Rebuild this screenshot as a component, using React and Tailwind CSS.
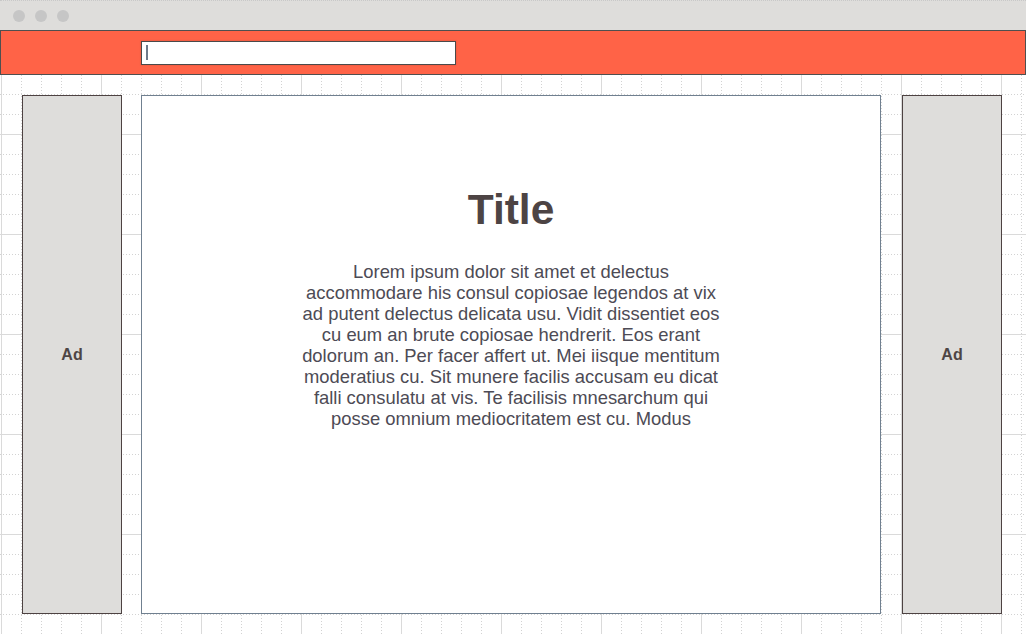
import React from "react";

function GridBg() {
  const vs = [];
  for (let i = 0; i < 52; i++) {
    const x = 1 + i * 20;
    const solid = i % 5 === 0;
    vs.push(
      <line
        key={"v" + i}
        x1={x + 0.5}
        y1={0}
        x2={x + 0.5}
        y2={634}
        stroke={solid ? "#dadada" : "#d2d2d2"}
        strokeWidth="1"
        strokeDasharray={solid ? undefined : "1 2"}
      />
    );
  }
  const hs = [];
  for (let j = 0; j < 33; j++) {
    const y = 14 + j * 20;
    const solid = (y - 34) % 100 === 0;
    hs.push(
      <line
        key={"h" + j}
        x1={0}
        y1={y + 0.5}
        x2={1026}
        y2={y + 0.5}
        stroke={solid ? "#dadada" : "#d2d2d2"}
        strokeWidth="1"
        strokeDasharray={solid ? undefined : "1 2"}
      />
    );
  }
  return (
    <svg
      className="absolute inset-0 pointer-events-none"
      width="1026"
      height="634"
      viewBox="0 0 1026 634"
    >
      {vs}
      {hs}
    </svg>
  );
}

function Ad() {
  return (
    <div className="w-[100px] h-[519px] shrink-0 bg-[#dedddb] border border-[#4d4242] flex items-center justify-center">
      <span className="text-[16px] font-bold text-[#4d4545]">Ad</span>
    </div>
  );
}

export default function App() {
  return (
    <div
      className="relative w-[1026px] h-[634px] overflow-hidden bg-white"
      style={{ fontFamily: '"Liberation Sans", Arial, sans-serif' }}
    >
      <GridBg />
      <div className="relative flex flex-col">
        {/* window title bar */}
        <div className="h-[30px] bg-[#dedddb] border-t border-dotted border-[#c8c8c8] flex items-center pl-[13px] gap-[10px]">
          <span className="w-[12px] h-[12px] rounded-full bg-[#c6c6c6]" />
          <span className="w-[12px] h-[12px] rounded-full bg-[#c6c6c6]" />
          <span className="w-[12px] h-[12px] rounded-full bg-[#c6c6c6]" />
        </div>
        {/* header */}
        <div className="h-[45px] bg-[#ff6347] border border-[#4f4f4f] flex items-center pl-[140px]">
          <div className="w-[315px] h-[24px] bg-white border border-[#4a4a4a] flex items-center pl-[4px] shadow-[0_0_2px_rgba(0,0,0,0.15)]">
            <span className="w-[2px] h-[15px] bg-[#6e7a8a]" />
          </div>
        </div>
        {/* content */}
        <div className="flex pl-[22px] pt-[20px]">
          <Ad />
          <div className="ml-[19px] w-[740px] h-[519px] shrink-0 bg-white border border-[#708090] flex flex-col items-center pt-[93px]">
            <h1 className="text-[42.5px] leading-none font-bold text-[#4d4444]">Title</h1>
            <p className="mt-[29px] w-[428px] text-center text-[18.4px] leading-[21px] text-[#4d4b55]">
              Lorem ipsum dolor sit amet et delectus accommodare his consul
              copiosae legendos at vix ad putent delectus delicata usu. Vidit
              dissentiet eos cu eum an brute copiosae hendrerit. Eos erant
              dolorum an. Per facer affert ut. Mei iisque mentitum moderatius
              cu. Sit munere facilis accusam eu dicat falli consulatu at vis.
              Te facilisis mnesarchum qui posse omnium mediocritatem est cu.
              Modus
            </p>
          </div>
          <div className="ml-[21px]">
            <Ad />
          </div>
        </div>
      </div>
    </div>
  );
}
